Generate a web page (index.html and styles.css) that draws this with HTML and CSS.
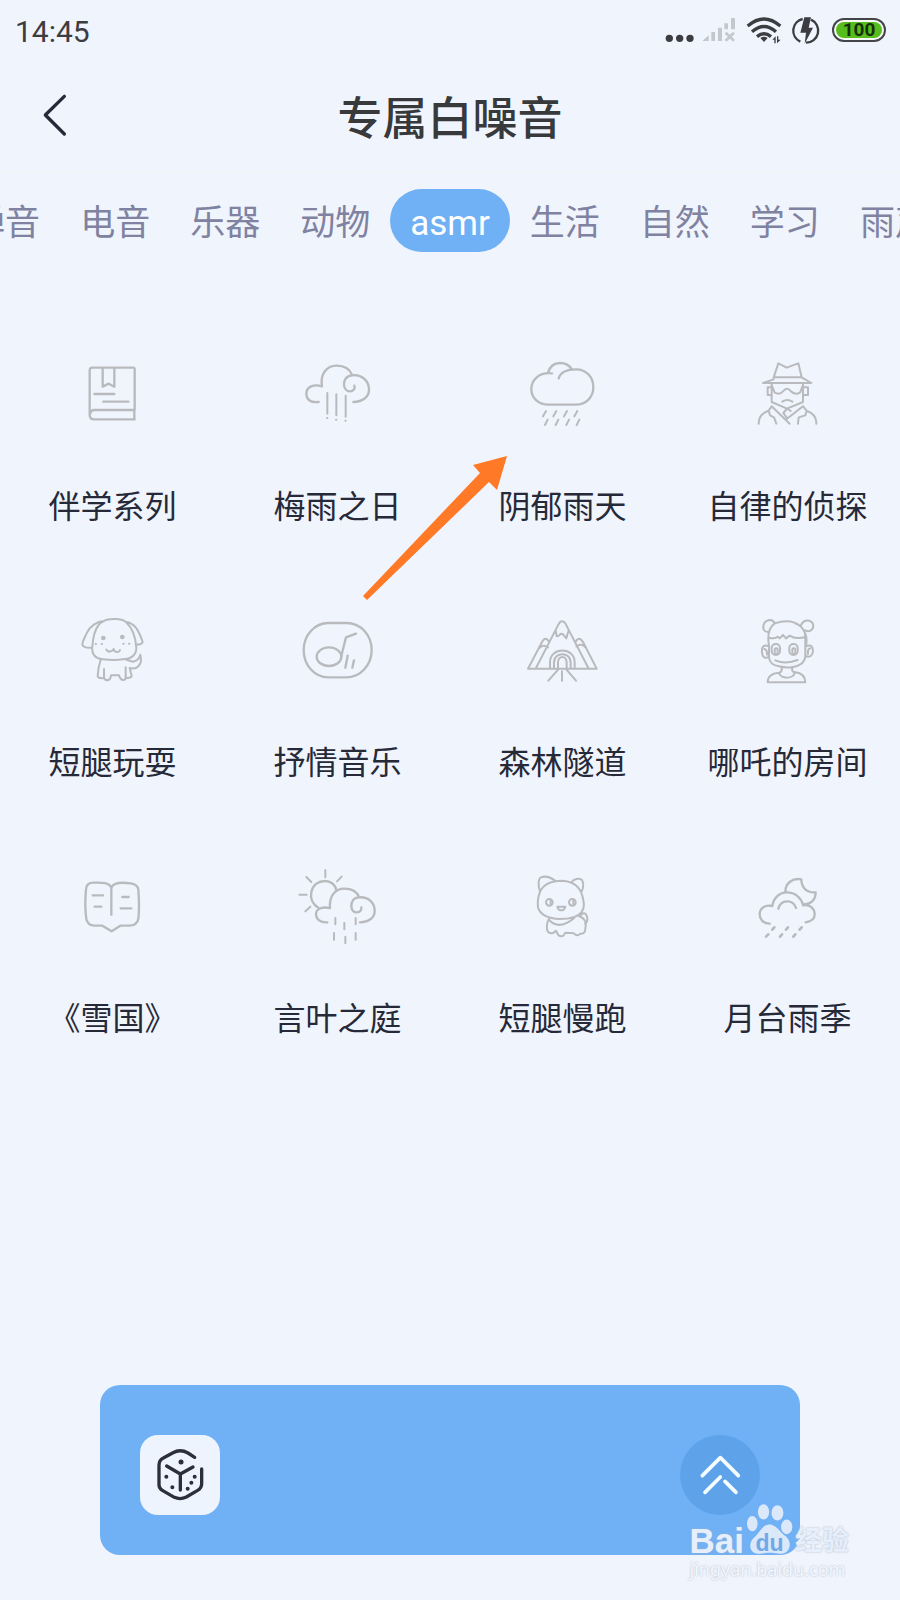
FILE: index.html
```html
<!DOCTYPE html>
<html lang="zh-CN">
<head>
<meta charset="utf-8">
<meta name="viewport" content="width=device-width, initial-scale=1">
<title>专属白噪音</title>
<link rel="stylesheet" href="styles.css">
</head>
<body>
<div class="status">
  <time class="clock">14:45</time>
  <div class="indicators">
    <svg class="dots" viewBox="642 45 90 90"><circle cx="658" cy="115" r="11"/><circle cx="689" cy="115" r="11"/><circle cx="720" cy="115" r="11"/></svg>
    <svg class="signal" viewBox="756 45 102 90"><path d="M757 123L776 106V123ZM784 96h11v27h-11ZM804 83h12v40h-12ZM823 70h11v18h-11ZM843 54h12v34h-12Z"/><path class="cross" d="M827 98L852 122M852 98L827 122"/></svg>
    <svg class="wifi" viewBox="882 45 117 90"><path d="M893 78Q942 36 991 78M906 95Q942 64 978 95M921 110Q942 93 963 110"/><path class="solid" d="M931 114Q942 107 953 114L942 126ZM967 119L977 109V130H973V119ZM981 109H985V119H992L981 130Z"/></svg>
    <svg class="charge" viewBox="1023 45 90 90"><path d="M1058 57A36 36 0 0 0 1051 125M1083 59A36 36 0 0 1 1068 128"/><path class="solid" d="M1063 52H1083L1076 83H1089L1064 131L1068 98H1051Z"/></svg>
    <div class="battery"><span>100</span></div>
  </div>
</div>

<header class="topbar">
  <button class="back" type="button" aria-label="返回"><svg viewBox="120 270 90 150"><path d="M193 289L136 345L193 402"/></svg></button>
  <h1>专属白噪音</h1>
</header>

<nav class="tabs">
  <button type="button">禅音</button>
  <button type="button">电音</button>
  <button type="button">乐器</button>
  <button type="button">动物</button>
  <button type="button" class="active">asmr</button>
  <button type="button">生活</button>
  <button type="button">自然</button>
  <button type="button">学习</button>
  <button type="button">雨声</button>
</nav>

<main class="sounds">
  <button class="sound" type="button">
    <svg viewBox="99 42 240 240"><path d="M284 210V87Q284 83 280 83H157Q149 83 149 91V225Q149 238 163 238H284M284 210H164Q150 210 150 224M283 210V238M188 83V140L206 131L223 140V83M163 162H223M190 185H265"/></svg>
    <span>伴学系列</span>
  </button>
  <button class="sound" type="button">
    <svg viewBox="774 42 240 240"><path d="M836 186C810 189 799 177 799 161C799 140 822 131 846 139C840 101 860 77 890 77C915 77 930 89 937 106C963 102 987 121 987 149C987 171 968 185 940 186M937 106C919 107 911 120 912 135C913 148 922 154 931 154C941 153 946 145 943 137"/><path class="thin" d="M862 159V221M889 163V226M917 167V230M861 234h1M888 239h1M916 242h1"/></svg>
    <span>梅雨之日</span>
  </button>
  <button class="sound" type="button">
    <svg viewBox="130 42 240 240"><path d="M217 100C180 95 155 119 155 147C155 175 178 194 206 194H288C320 194 341 171 341 142C341 112 320 88 290 88C261 88 242 98 237 115M205 98C212 76 226 69 241 69C257 69 270 77 276 88"/><path class="thin" d="M199 213L190 229M230 213L221 229M262 213L253 229M293 213L284 229M204 239L196 255M236 239L228 255M268 239L260 255M299 239L291 255"/></svg>
    <span>阴郁雨天</span>
  </button>
  <button class="sound" type="button">
    <svg viewBox="804 42 240 240"><path class="thin" d="M881 112L895 70L920 83L955 70L965 112M881 112H965L994 129H849L881 118ZM875 131V186L921 206L969 186V131M874 142H863V165H874M970 142H984V165H970M875 135L884 158Q900 166 910 153Q921 139 932 153Q944 167 960 158L969 135M907 185Q922 175 937 185M875 199L929 251M932 213L921 206L910 219L920 233M969 199L919 238M875 199L866 212L870 226L882 232L889 251M969 199L980 212L976 226L956 232L954 251M864 213C844 220 836 231 836 251M981 213C1001 220 1010 231 1009 251"/></svg>
    <span>自律的侦探</span>
  </button>
  <button class="sound" type="button">
    <svg viewBox="99 30 240 240"><path class="thin" d="M192 63C201 56 216 57 226 57C243 57 251 60 258 66C275 82 287 109 289 143C290 164 273 178 249 178C225 182 207 180 188 178C166 176 154 162 157 140C159 110 165 88 176 75C181 68 187 65 192 63M192 63C170 64 150 79 141 98C134 113 127 123 127 134Q130 144 155 143M258 66C284 68 297 93 308 126Q306 134 288 134M182 180C177 194 174 209 173 229Q175 236 192 234V207M192 234Q196 242 204 240Q211 240 213 226H237Q241 239 249 240Q257 240 257 234V202M257 234Q273 235 275 228L269 204C290 210 309 195 301 164Q296 182 279 185L261 180M199 149Q203 157 212 154Q219 152 221 147Q221 155 231 156Q238 157 240 150M167 132h1M185 132h1M250 131h1M267 131h1"/><circle class="filled" cx="190" cy="114" r="7"/><circle class="filled" cx="247" cy="111" r="7"/></svg>
    <span>短腿玩耍</span>
  </button>
  <button class="sound" type="button">
    <svg viewBox="774 30 240 240"><path d="M865 69H919C965 69 995 108 995 150C995 194 962 232 919 232H865C823 232 791 195 791 150C791 106 824 69 865 69ZM903 172L918 112L948 101M923 167L916 203M942 181L937 203"/><ellipse cx="867" cy="170" rx="37" ry="28"/></svg>
    <span>抒情音乐</span>
  </button>
  <button class="sound" type="button">
    <svg viewBox="130 30 240 240"><path class="thin" d="M145 206L187 126Q197 106 209 126M351 206L310 126Q298 106 287 126M145 206H210M286 206H351M169 204L238 70Q247 58 257 70L326 204M228 92L231 108Q238 111 243 101L250 103L260 115L266 94M178 145Q190 131 205 142M290 139Q307 127 319 144M211 206V187C211 140 285 140 285 187V206ZM223 206V188C223 154 273 154 273 188V206M235 206V188C235 165 261 165 261 188V206M238 206L206 242M258 206L289 242M247 214V242"/></svg>
    <span>森林隧道</span>
  </button>
  <button class="sound" type="button">
    <svg viewBox="804 30 240 240"><path class="thin" d="M884 70C879 57 862 56 853 69C845 86 853 98 867 96M884 70C925 56 949 67 963 80M963 75C974 54 998 59 1000 78C999 91 987 97 976 91M884 70C865 84 862 109 867 137V172C868 187 881 197 897 199C924 206 950 202 964 191C974 183 977 173 976 159V113C976 95 967 77 947 71M963 80Q985 105 978 136M867 113C878 116 888 115 893 110L899 115L909 105L918 115L929 107Q945 118 975 112M866 139C853 132 844 139 846 157Q848 178 863 172M977 139C993 132 999 139 999 153Q997 174 979 169M886 181Q917 194 953 180M905 204Q907 216 897 218C873 220 863 232 863 247H976C975 229 964 219 946 217C935 216 936 210 937 204M897 218C899 238 945 238 944 217"/><path class="thin" d="M853 147Q862 149 861 164M991 145Q982 147 984 162"/><rect class="thin" x="875" y="132" width="25" height="33" rx="12"/><rect class="thin" x="928" y="132" width="25" height="33" rx="12"/><rect class="thin" x="884" y="145" width="9" height="17" rx="4"/><rect class="thin" x="937" y="145" width="9" height="17" rx="4"/></svg>
    <span>哪吒的房间</span>
  </button>
  <button class="sound" type="button">
    <svg viewBox="99 48 240 240"><path d="M214 194V113C207 98 188 97 160 98Q139 98 138 118C135 150 135 179 139 207Q143 226 163 227H187L215 244L241 227H266Q292 227 295 206C299 174 297 146 295 119Q293 103 273 100C246 97 222 96 214 113M158 136H189M164 170H184M247 141H266M242 175H274"/></svg>
    <span>《雪国》</span>
  </button>
  <button class="sound" type="button">
    <svg viewBox="774 48 240 240"><path d="M836 174C817 162 810 145 814 126C819 104 836 93 855 93C872 93 886 104 889 120M862 217C839 218 828 206 828 192C828 177 846 169 870 174C867 138 885 116 913 116C934 116 951 125 958 142C984 140 1004 157 1004 183C1004 203 987 216 960 217M958 142C941 142 933 155 934 170C935 182 943 188 951 187C960 187 966 180 964 172"/><path class="thin" d="M856 60V82M905 80L891 94M799 81L814 96M778 134H800M811 170L796 184M886 204V223M947 204V223M913 219V238M882 249V269M947 249V269M916 260V280"/></svg>
    <span>言叶之庭</span>
  </button>
  <button class="sound" type="button">
    <svg viewBox="130 48 240 240"><path class="thin" d="M225 91C210 80 195 78 184 82C175 86 175 108 181 126M275 97C285 84 302 84 307 90C312 99 311 112 307 123M181 126C191 101 219 92 248 92C276 94 300 108 308 137C313 158 316 172 306 186C294 203 271 207 239 207C208 206 180 195 175 172Q172 147 181 126M208 207Q200 219 202 238Q205 251 216 250Q224 250 228 242C235 242 228 259 246 259C258 258 250 248 260 248C276 251 283 247 286 253Q294 259 302 251C318 252 316 241 318 229C320 215 312 203 297 198M207 208Q236 243 284 204M303 195Q316 182 322 200Q326 214 316 221"/><circle class="thin" cx="209" cy="157" r="10"/><path class="thin" d="M213 152v10M281 152v10M233 170H257Q254 181 245 181Q236 181 233 170Z"/><circle class="thin" cx="278" cy="157" r="10"/></svg>
    <span>短腿慢跑</span>
  </button>
  <button class="sound" type="button">
    <svg viewBox="804 48 240 240"><path d="M869 221C849 221 839 208 839 193C839 174 856 163 877 168C880 143 899 127 921 127C944 127 963 142 970 166C989 162 1004 176 1004 193C1004 207 993 215 977 217M895 176C902 147 940 147 948 174M916 125C916 100 937 83 964 88C964 111 978 129 1007 127C1007 149 994 162 973 163"/><path class="thick" d="M883 232L877 239M924 232L918 239M965 232L959 239M865 253L858 260M906 253L900 260M946 253L940 260"/></svg>
    <span>月台雨季</span>
  </button>
</main>

<section class="player">
  <button class="dice" type="button" aria-label="随机播放"><svg viewBox="150 195 240 240"><path d="M314 262L294 249C278 240 264 240 249 248L220 264Q207 270 207 286V344Q207 355 217 361L253 382Q271 390 289 381L323 361Q335 354 335 341V297M230 288L271 312L309 291M271 312V360"/><path class="pips" d="M273 276h.1"/><path class="small" d="M229 320h.1M247 352h.1M293 356h.1M304 338h.1M314 320h.1"/></svg></button>
  <button class="expand" type="button" aria-label="展开"><svg viewBox="118 195 240 240"><path d="M185 317L239 263L293 317M193 367L239 321M253 334L286 367"/></svg></button>
</section>

<svg class="pointer" viewBox="0 0 144 146" aria-hidden="true"><path d="M144 1L134 35L126 27L4 145L0 141L117 18L110 10Z"/></svg>

<div class="watermark">
  <div class="brand">
    <span class="bai">Bai</span>
    <span class="paw"><svg viewBox="316 400 142 155"><ellipse cx="335" cy="461" rx="16" ry="23"/><ellipse cx="369" cy="426" rx="17" ry="23"/><ellipse cx="411" cy="429" rx="18" ry="23"/><ellipse cx="439" cy="471" rx="17" ry="22"/><path d="M387 464C409 464 420 490 437 500C459 520 446 552 423 552C405 552 399 549 387 549C375 549 369 552 352 552C327 552 321 521 340 504C357 490 365 464 387 464Z"/></svg><b>du</b></span>
    <span class="exp">经验</span>
  </div>
  <span class="site">jingyan.baidu.com</span>
</div>
</body>
</html>
```
FILE: styles.css
```css
* { box-sizing: border-box; }

body {
  position: relative;
  display: flex;
  flex-direction: column;
  min-height: 100vh;
  margin: 0;
  overflow-x: hidden;
  background: #f0f4fc;
  color: #262938;
  font-family: Roboto, "Noto Sans CJK SC", sans-serif;
}

button {
  padding: 0;
  border: 0;
  background: none;
  color: inherit;
  font: inherit;
}

svg {
  display: block;
  fill: none;
  stroke-linecap: round;
  stroke-linejoin: round;
}

/* Status bar */
.status {
  display: flex;
  align-items: center;
  justify-content: space-between;
  height: 64px;
  padding: 0 11px 4px 15px;
  color: #3c3d41;
}
.clock { font-size: 30px; line-height: 32px; padding-top: 4px; }
.indicators { display: flex; align-items: center; gap: 8px; }
.indicators svg { height: 30px; }
.dots { width: 30px; fill: #3c3d41; }
.signal { width: 34px; fill: #c5c7ce; }
.cross { stroke: #c5c7ce; stroke-width: 8; stroke-linecap: butt; }
.wifi { width: 39px; stroke: #3c3d41; stroke-width: 10; stroke-linecap: butt; }
.charge { width: 30px; stroke: #3c3d41; stroke-width: 7; stroke-linecap: butt; }
.solid { fill: #3c3d41; stroke: none; }
.battery {
  width: 54px;
  height: 24px;
  margin: 0 3px;
  padding: 2px;
  border: 2px solid #44454a;
  border-radius: 12px;
  background: #f8faf6;
}
.battery span {
  display: block;
  height: 16px;
  border-radius: 8px;
  background: #57bd1d;
  color: #17300c;
  font-size: 19px;
  font-weight: 700;
  line-height: 16px;
  text-align: center;
}

/* Title bar */
.topbar {
  display: grid;
  grid-template-columns: 110px 1fr 110px;
  align-items: center;
  height: 108px;
  border-bottom: 2px solid #f2f4f8;
}
.back { width: 30px; height: 50px; margin: 0 0 4px 40px; }
.back svg { width: 30px; height: 50px; stroke: #262938; stroke-width: 10; }
h1 {
  margin: 0;
  padding-top: 6px;
  color: #38393b;
  font-size: 45px;
  font-weight: 500;
  line-height: 64px;
  text-align: center;
}

/* Category tabs */
.tabs {
  display: flex;
  justify-content: center;
  margin-top: 17px;
  overflow: hidden;
  color: #7f82a0;
  font-size: 35px;
  line-height: 57px;
}
.tabs button { flex: none; height: 63px; padding: 6px 20px 0; border-radius: 32px; white-space: nowrap; }
.tabs .active { background: #70b0f4; color: #fff; }

/* Sound grid */
.sounds {
  display: grid;
  grid-template-columns: repeat(4, 1fr);
  align-content: start;
  flex: 1;
  row-gap: 79px;
  padding: 102px 0 64px;
}
.sound {
  display: flex;
  flex-direction: column;
  align-items: center;
  gap: 49px;
  font-size: 32px;
  line-height: 48px;
  white-space: nowrap;
}
.sound svg { width: 80px; height: 80px; stroke: #b9babd; stroke-width: 7; }
.sound .thin { stroke-width: 6; }
.sound .thick { stroke-width: 8; }
.sound .filled { fill: #b9babd; stroke: none; }

/* Player card */
.player {
  display: flex;
  align-items: center;
  justify-content: space-between;
  height: 170px;
  margin: 0 100px 45px;
  padding: 10px 40px 0;
  border-radius: 20px;
  background: #70b0f4;
}
.player button { width: 80px; height: 80px; }
.player svg { width: 80px; height: 80px; }
.dice { border-radius: 18px; background: #edf4fd; }
.dice svg { stroke: #2c2e3a; stroke-width: 10; }
.dice .pips { stroke-width: 15; }
.dice .small { stroke-width: 12; }
.expand { border-radius: 50%; background: #5ea3ea; }
.expand svg { stroke: #f5fdff; stroke-width: 11; }

/* Pointer drawn over the grid */
.pointer {
  position: absolute;
  top: 455px;
  left: calc(50% - 87px);
  width: 144px;
  height: 146px;
  fill: #ff7926;
  pointer-events: none;
}

/* Watermark over the card corner */
.watermark {
  position: absolute;
  right: 51px;
  bottom: 17px;
  color: #e6effb;
  text-shadow: 0 0 2px #a9b5c8;
  pointer-events: none;
}
.brand { display: flex; align-items: flex-end; height: 52px; }
.bai { font: 700 35px/28px "Liberation Sans", sans-serif; }
.paw { position: relative; width: 47px; height: 52px; margin-left: 2px; }
.paw svg { width: 47px; height: 52px; fill: #dbe8fa; }
.paw b {
  position: absolute;
  right: 0;
  bottom: 0;
  left: 0;
  color: #70a9e8;
  font: 700 23px/24px "Liberation Sans", sans-serif;
  text-align: center;
  text-shadow: none;
}
.exp { margin-left: 2px; font-size: 27px; font-weight: 700; line-height: 28px; }
.site { display: block; color: #f4f7fd; font: 18px/28px "Noto Sans", sans-serif; }
```
